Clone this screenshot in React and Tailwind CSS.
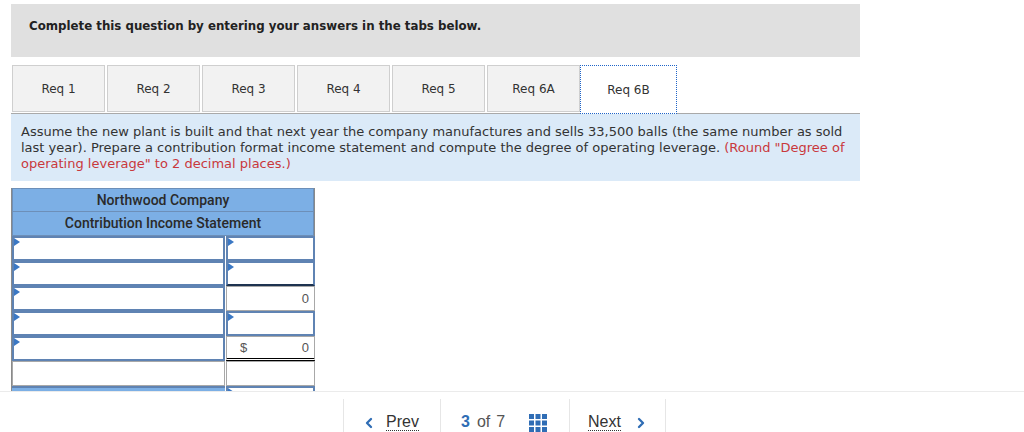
import React from 'react';
import { ChevronLeft, ChevronRight } from 'lucide-react';

const tabs = ['Req 1', 'Req 2', 'Req 3', 'Req 4', 'Req 5', 'Req 6A'];

// Small blue marker at the top-left of an answer cell
const Marker = () => (
    <span className="absolute left-0 top-0 h-0 w-0 border-y-[4px] border-l-[6px] border-y-transparent border-l-[#3b78c4]" />
);

const InputCell = ({ className = '' }) => (
    <div className={`relative h-full border-2 border-[#5f83b3] bg-white ${className}`}>
        <Marker />
    </div>
);

const PlainCell = ({ children, className = '' }) => (
    <div className={`flex h-full items-center border border-[#a8a8a8] bg-white px-[5px] font-['Liberation_Sans_Narrow','Liberation_Sans',sans-serif] text-[13px] text-[#555] ${className}`}>
        {children}
    </div>
);

const GridIcon = () => (
    <svg width="18" height="18" viewBox="0 0 18 18" className="fill-[#2f6db5]">
        {[0, 6.5, 13].map((y) =>
            [0, 6.5, 13].map((x) => <rect key={`${x}-${y}`} x={x} y={y} width="5" height="5" />)
        )}
    </svg>
);

export default function App() {
    return (
        <div className="flex h-[432px] w-[1024px] flex-col overflow-hidden bg-white font-['DejaVu_Sans',sans-serif]">
            <div className="flex-1 overflow-hidden pl-[11px] pt-[4px]">
                {/* Instruction banner */}
                <div className="flex h-[53px] w-[849px] items-center bg-[#e0e0e0] pl-[18px] pb-[7px] text-[11.8px] font-bold text-[#222]">
                    Complete this question by entering your answers in the tabs below.
                </div>

                {/* Tabs */}
                <div className="mt-[8px] flex h-[48px] w-[849px] pl-[1px]">
                    {tabs.map((t) => (
                        <div
                            key={t}
                            className="mr-[2px] flex h-[47px] w-[93px] items-center justify-center border border-[#cfcfcf] bg-[#f2f2f2] text-[12px] text-[#333]"
                        >
                            {t}
                        </div>
                    ))}
                    <div className="relative z-10 -ml-[2px] flex h-[49px] w-[97px] items-center justify-center border border-dotted border-[#1f64c8] bg-white text-[12px] text-[#333]">
                        Req 6B
                    </div>
                </div>

                {/* Question text */}
                <div className="w-[849px] border-t border-[#a9a9a9] bg-[#dbeaf8] px-[10px] pt-[10px] pb-[9px] text-[13px] leading-[16px] text-[#333]">
                    Assume the new plant is built and that next year the company manufactures and sells 33,500 balls (the same number as sold last year). Prepare a contribution format income statement and compute the degree of operating leverage.{' '}
                    <span className="text-[#c9383c]">(Round "Degree of operating leverage" to 2 decimal places.)</span>
                </div>

                {/* Income statement */}
                <div className="mt-[7px] w-[304px] border-l border-r border-[#8a8a8a] font-['Roboto',sans-serif]">
                    <div className="flex h-[24px] items-center justify-center border border-[#6d8fb8] bg-[#7cafe5] text-[14px] font-medium text-[#2a2a2a]">
                        Northwood Company
                    </div>
                    <div className="flex h-[24px] items-center justify-center border-x border-b border-[#6d8fb8] bg-[#7cafe5] text-[14px] font-medium text-[#2a2a2a]">
                        Contribution Income Statement
                    </div>
                    <div className="grid grid-cols-[213px_89px] grid-rows-[25px_25px_25px_25px_25px_25px_25px] gap-x-[1px]">
                        <InputCell />
                        <InputCell />

                        <InputCell />
                        <InputCell className="border-b-[#1e3350]" />

                        <InputCell />
                        <PlainCell className="justify-end">0</PlainCell>

                        <InputCell />
                        <InputCell />

                        <InputCell />
                        <PlainCell className="justify-between border-b-[3px] border-b-black border-double pl-[13px]">
                            <span>$</span>
                            <span>0</span>
                        </PlainCell>

                        <PlainCell />
                        <PlainCell />

                        <div className="border-t-2 border-[#5f83b3] bg-[#7cafe5]" />
                        <InputCell />
                    </div>
                </div>
            </div>

            {/* Bottom navigation */}
            <div className="flex h-[41px] shrink-0 border-t border-[#ebebeb] bg-white pl-[343px] pt-[7px] font-['Liberation_Sans',sans-serif] text-[16px] text-[#333]">
                <div className="flex w-[97px] items-start border-l border-[#e6e6e6] pl-[17px] pt-[14px]">
                    <ChevronLeft size={16} strokeWidth={3.5} className="mt-[2px] text-[#2f6db5]" />
                    <span className="ml-[9px] border-b border-dotted border-[#333] leading-[17px]">Prev</span>
                </div>
                <div className="flex w-[129px] items-start border-l border-[#e6e6e6] pl-[20px] pt-[14px]">
                    <span className="font-bold leading-[18px] text-[#2f6db5]">3</span>
                    <span className="ml-[7px] leading-[18px] text-[#555]">of</span>
                    <span className="ml-[6px] leading-[18px] text-[#555]">7</span>
                    <span className="ml-[24px] mt-[1px]">
                        <GridIcon />
                    </span>
                </div>
                <div className="flex w-[97px] items-start border-x border-[#e6e6e6] pl-[18px] pt-[14px]">
                    <span className="border-b border-dotted border-[#333] leading-[17px]">Next</span>
                    <ChevronRight size={16} strokeWidth={3.5} className="ml-[12px] mt-[2px] text-[#2f6db5]" />
                </div>
            </div>
        </div>
    );
}
